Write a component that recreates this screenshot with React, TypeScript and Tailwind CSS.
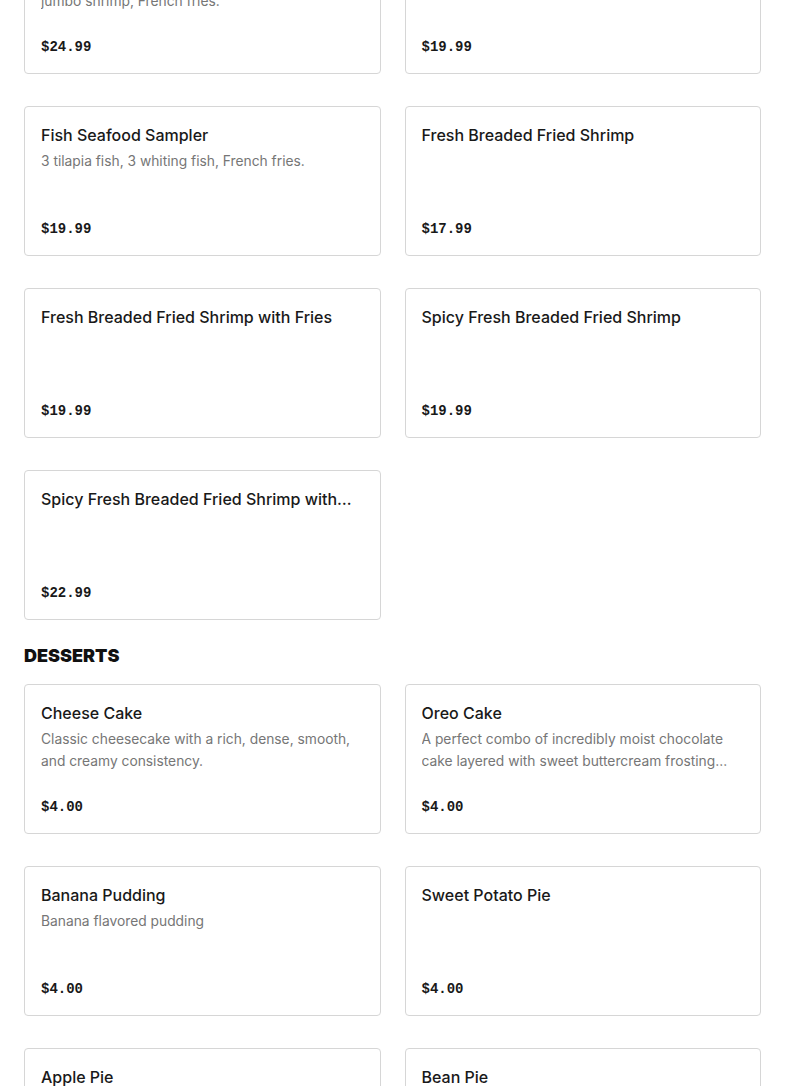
type MenuItem = {
  name: string;
  description?: string;
  price: string;
};

type Section = {
  title?: string;
  items: MenuItem[];
};

const sections: Section[] = [
  {
    items: [
      {
        name: "Fish & Shrimp Combo",
        description:
          "2 tilapia fish, 2 whiting fish, 6 fresh breaded jumbo shrimp, French fries.",
        price: "$24.99",
      },
      { name: "Fried Whiting Fish Dinner", price: "$19.99" },
      {
        name: "Fish Seafood Sampler",
        description: "3 tilapia fish, 3 whiting fish, French fries.",
        price: "$19.99",
      },
      { name: "Fresh Breaded Fried Shrimp", price: "$17.99" },
      { name: "Fresh Breaded Fried Shrimp with Fries", price: "$19.99" },
      { name: "Spicy Fresh Breaded Fried Shrimp", price: "$19.99" },
      { name: "Spicy Fresh Breaded Fried Shrimp with Fries", price: "$22.99" },
    ],
  },
  {
    title: "DESSERTS",
    items: [
      {
        name: "Cheese Cake",
        description:
          "Classic cheesecake with a rich, dense, smooth, and creamy consistency.",
        price: "$4.00",
      },
      {
        name: "Oreo Cake",
        description:
          "A perfect combo of incredibly moist chocolate cake layered with sweet buttercream frosting sprinkled with crushed Oreo cookies.",
        price: "$4.00",
      },
      {
        name: "Banana Pudding",
        description: "Banana flavored pudding",
        price: "$4.00",
      },
      { name: "Sweet Potato Pie", price: "$4.00" },
      { name: "Apple Pie", price: "$4.00" },
      { name: "Bean Pie", price: "$4.00" },
    ],
  },
];

function ItemCard({ item }: { item: MenuItem }) {
  return (
    <div className="h-[150px] flex flex-col rounded-[4px] border border-[#d6d6d6] bg-white px-4 pt-4 pb-4">
      <h3 className="text-[16px] leading-6 font-medium text-[#191919] line-clamp-1">
        {item.name}
      </h3>
      {item.description && (
        <p className="mt-[3px] text-[13.8px] leading-[22px] text-[#767676] line-clamp-2">
          {item.description}
        </p>
      )}
      <div className="mt-auto font-['Liberation_Mono',monospace] font-bold text-[14px] leading-5 text-[#191919]">
        {item.price}
      </div>
    </div>
  );
}

function App() {
  return (
    <div className="min-h-screen bg-white font-['Inter',sans-serif] overflow-hidden">
      <div className="px-6 -mt-[76px]">
        {sections.map((section, i) => (
          <section key={i}>
            {section.title && (
              <h2 className="mt-6 mb-4 text-[18px] leading-6 font-black text-[#111]">
                {section.title}
              </h2>
            )}
            <div className="grid grid-cols-2 gap-x-6 gap-y-8">
              {section.items.map((item) => (
                <ItemCard key={item.name} item={item} />
              ))}
            </div>
          </section>
        ))}
      </div>
    </div>
  );
}

export default App;
